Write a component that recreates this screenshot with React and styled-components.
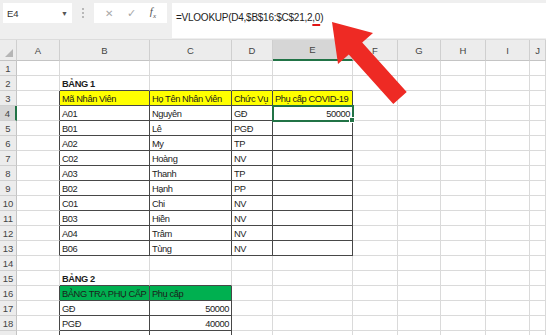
import React from 'react';
import styled, { createGlobalStyle, css } from 'styled-components';

const GlobalStyle = createGlobalStyle`
  body {
    margin: 0;
    background: #fff;
    overflow: hidden;
    font-family: "Liberation Sans", Arial, sans-serif;
  }
`

const Page = styled.div`
  position: relative;
  width: 546px;
  height: 335px;
  overflow: hidden;
`

const Toolbar = styled.div`
  display: flex;
  align-items: flex-start;
  height: 40px;
  box-sizing: border-box;
  padding-top: 3px;
  background: #efefef;
  border-bottom: 1px solid #dcdcdc;
`

const NameBox = styled.div`
  display: flex;
  align-items: center;
  justify-content: space-between;
  width: 69px;
  height: 20px;
  margin-left: 3px;
  box-sizing: border-box;
  padding: 0 4px 0 4px;
  background: #fff;
  font-size: 9.5px;
  color: #333;
`

const Caret = styled.span`
  font-size: 7px;
  color: #555;
`

const Dots = styled.div`
  width: 0;
  height: 10px;
  margin: 5px 10px 0 10px;
  border-left: 2px dotted #b8b8b8;
`

const FuncBox = styled.div`
  display: flex;
  align-items: center;
  justify-content: space-around;
  width: 73px;
  height: 20px;
  box-sizing: border-box;
  padding: 0 4px;
  background: #fff;
`

const FuncIcon = styled.span`
  font-size: ${p => p.$size || 10}px;
  color: ${p => p.$color || '#a8a8a8'};
  font-family: ${p => p.$serif ? '"Liberation Serif", serif' : 'inherit'};
  font-style: ${p => p.$serif ? 'italic' : 'normal'};
`

const FormulaBox = styled.div`
  flex: 1;
  height: 35px;
  margin-left: 5px;
  box-sizing: border-box;
  padding: 9px 4px 0 4px;
  background: #fff;
  font-size: 10px;
  letter-spacing: -0.25px;
  color: #222;
`

const Mark = styled.span`
  text-decoration: underline;
  text-decoration-color: #e01515;
  text-decoration-thickness: 2px;
  text-underline-offset: 3px;
`

const Sheet = styled.div`
  display: grid;
  grid-template-columns: 17px 43px 90px 82px 41px 80px 45px 43px 45px 44px 1fr;
  grid-template-rows: 21px;
  grid-auto-rows: 15px;
  font-size: 9.5px;
`

const HeadCell = styled.div`
  display: flex;
  align-items: center;
  justify-content: center;
  box-sizing: border-box;
  background: ${p => p.$active ? '#d6d6d6' : '#ececec'};
  color: #444;
  border-right: 1px solid #cfcfcf;
  border-bottom: ${p => p.$active ? '2px solid #217346' : '1px solid #c4c4c4'};
`

const Corner = styled.div`
  position: relative;
  box-sizing: border-box;
  background: #ececec;
  border-right: 1px solid #cfcfcf;
  border-bottom: 1px solid #c4c4c4;
  &::after {
    content: '';
    position: absolute;
    right: 3px;
    bottom: 3px;
    border-left: 8px solid transparent;
    border-bottom: 8px solid #b5b5b5;
  }
`

const RowHead = styled.div`
  display: flex;
  align-items: center;
  justify-content: center;
  box-sizing: border-box;
  background: ${p => p.$active ? '#d6d6d6' : '#ececec'};
  color: #444;
  border-bottom: 1px solid #d0d0d0;
  border-right: ${p => p.$active ? '2px solid #217346' : '1px solid #c4c4c4'};
`

const dark = '1px solid #474747';
const grid = '1px solid #dadada';

const Cell = styled.div`
  position: relative;
  display: flex;
  align-items: flex-end;
  justify-content: ${p => p.$right ? 'flex-end' : 'flex-start'};
  box-sizing: border-box;
  padding: 0 2px 1px 2px;
  white-space: nowrap;
  font-size: 9.3px;
  letter-spacing: -0.4px;
  color: #1c1c1c;
  font-weight: ${p => p.$bold ? 700 : 400};
  background: ${p => p.$fill || '#fff'};
  border-right: ${p => p.$dr ? dark : grid};
  border-bottom: ${p => p.$db ? dark : grid};
  ${p => p.$selected && css`
    z-index: 1;
    outline: 2px solid #217346;
    outline-offset: -1px;
    &::after {
      content: '';
      position: absolute;
      right: -3px;
      bottom: -3px;
      width: 4px;
      height: 4px;
      background: #217346;
      border: 1px solid #fff;
    }
  `}
`

const Arrow = styled.svg`
  position: absolute;
  top: 0;
  left: 0;
  pointer-events: none;
`

const COLS = ['A', 'B', 'C', 'D', 'E', 'F', 'G', 'H', 'I', 'J'];
const YELLOW = '#ffff00';
const GREEN = '#00b050';

const table1 = [
  ['A01', 'Nguyên', 'GĐ', '50000'],
  ['B01', 'Lê', 'PGĐ', ''],
  ['A02', 'My', 'TP', ''],
  ['C02', 'Hoàng', 'NV', ''],
  ['A03', 'Thanh', 'TP', ''],
  ['B02', 'Hạnh', 'PP', ''],
  ['C01', 'Chi', 'NV', ''],
  ['B03', 'Hiền', 'NV', ''],
  ['A04', 'Trâm', 'NV', ''],
  ['B06', 'Tùng', 'NV', ''],
];

const table2 = [
  ['GĐ', '50000'],
  ['PGĐ', '40000'],
  ['', ''],
];

// builds { 'row-col': props } for the cells that carry content or borders
const buildCells = () => {
  const cells = {};
  const set = (r, c, v) => { cells[`${r}-${c}`] = { ...(cells[`${r}-${c}`] || {}), ...v } };

  set(2, 'B', { text: 'BẢNG 1', $bold: true });
  ['B', 'C', 'D', 'E'].forEach(c => set(2, c, { $db: true }));
  ['Mã Nhân Viên', 'Họ Tên Nhân Viên', 'Chức Vụ', 'Phụ cấp COVID-19'].forEach((t, i) => {
    set(3, COLS[i + 1], { text: t, $fill: YELLOW, $dr: true, $db: true });
  });
  table1.forEach((row, ri) => {
    row.forEach((t, i) => set(ri + 4, COLS[i + 1], { text: t, $dr: true, $db: true, $right: i === 3 }));
  });
  for (let r = 3; r <= 13; r++) set(r, 'A', { $dr: true });
  set(4, 'E', { $selected: true });

  set(15, 'B', { text: 'BẢNG 2', $bold: true });
  ['B', 'C'].forEach(c => set(15, c, { $db: true }));
  set(16, 'B', { text: 'BẢNG TRA PHỤ CẤP', $fill: GREEN, $dr: true, $db: true });
  set(16, 'C', { text: 'Phụ cấp', $fill: GREEN, $dr: true, $db: true });
  table2.forEach((row, ri) => {
    set(ri + 17, 'B', { text: row[0], $dr: true, $db: true });
    set(ri + 17, 'C', { text: row[1], $dr: true, $db: true, $right: true });
  });
  for (let r = 16; r <= 19; r++) set(r, 'A', { $dr: true });
  return cells;
}

const cells = buildCells();
const rows = Array.from({ length: 19 }, (_, i) => i + 1);

const App = () => (
  <Page>
    <GlobalStyle />
    <Toolbar>
      <NameBox>E4<Caret>▼</Caret></NameBox>
      <Dots />
      <FuncBox>
        <FuncIcon $size={10}>✕</FuncIcon>
        <FuncIcon $size={11}>✓</FuncIcon>
        <FuncIcon $size={11} $color="#555" $serif>f<sub style={{ fontSize: 7 }}>x</sub></FuncIcon>
      </FuncBox>
      <FormulaBox>=VLOOKUP(D4,$B$16:$C$21,2<Mark>,0</Mark>)</FormulaBox>
    </Toolbar>
    <Sheet>
      <Corner />
      {COLS.map(c => <HeadCell key={c} $active={c === 'E'}>{c}</HeadCell>)}
      {rows.map(r => (
        <React.Fragment key={r}>
          <RowHead $active={r === 4}>{r < 19 ? r : ''}</RowHead>
          {COLS.map(c => {
            const { text, ...rest } = cells[`${r}-${c}`] || {};
            return <Cell key={c} {...rest}>{text}</Cell>
          })}
        </React.Fragment>
      ))}
    </Sheet>
    <Arrow width="546" height="335" viewBox="0 0 546 335">
      <polygon
        fill="#ee2a24"
        points="332,22 373,33 362.2,42.5 406.7,92 393.3,104 348.8,54.5 338,64"
      />
    </Arrow>
  </Page>
)

export default App
